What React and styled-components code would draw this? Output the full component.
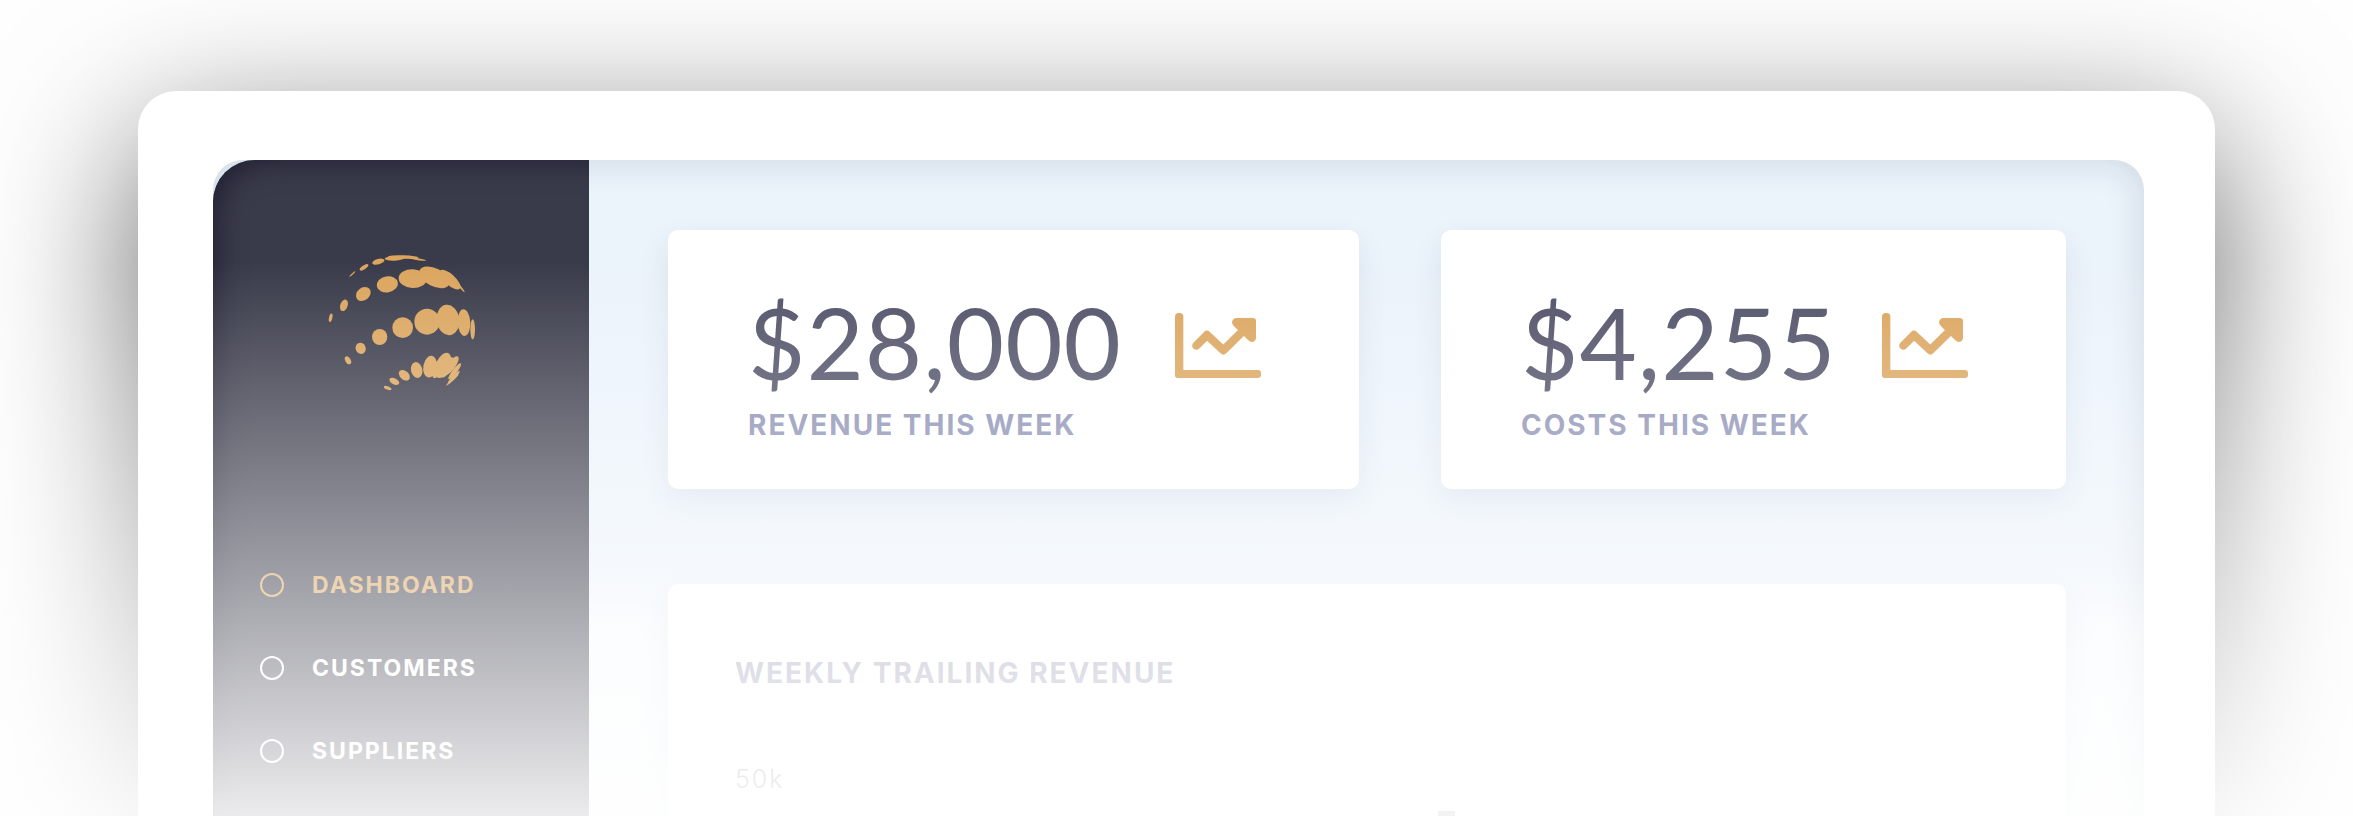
import React from "react";
import styled, { createGlobalStyle } from "styled-components";

const GlobalStyle = createGlobalStyle`
  *, *::before, *::after { box-sizing: border-box; }
  body { margin: 0; background: #fefefe; font-family: Inter, "Open Sans", sans-serif; }
  h2, p, ul { margin: 0; padding: 0; }
`;

const gold = "#dba55e";

const Page = styled.div`
  position: relative;
  display: flex;
  flex-direction: column;
  min-height: 100vh;
  padding: 91px 138px 0;
  overflow: hidden;

  &::after {
    content: "";
    position: absolute;
    inset: 0;
    pointer-events: none;
    background: linear-gradient(rgba(255, 255, 255, 0) 32%, rgba(255, 255, 255, 0.9) 100%);
  }
`;

const Window = styled.div`
  flex: 1;
  display: flex;
  margin-bottom: -160px;
  padding: 69px 71px 0 75px;
  border-radius: 38px;
  background: #fff;
  box-shadow: 0 45px 150px rgba(8, 8, 12, 0.6);
`;

const Panel = styled.div`
  flex: 1;
  display: flex;
  border-radius: 30px 30px 0 0;
  background: linear-gradient(#ebf3fb 50%, #f7fafd 60%);
  box-shadow: inset 0 0 36px rgba(20, 40, 60, 0.14);
  overflow: hidden;
`;

const Sidebar = styled.aside`
  flex: 0 0 376px;
  padding: 94px 45px 0 47px;
  border-top-left-radius: 42px;
  background: #3a3b4a;
  box-shadow: inset 16px 14px 26px -10px #232336;
`;

const LogoLink = styled.a`
  display: flex;
  justify-content: center;
  margin-bottom: 182px;
`;

const NavList = styled.ul`
  display: flex;
  flex-direction: column;
  gap: 59px;
  list-style: none;
`;

const NavLink = styled.a`
  display: flex;
  align-items: center;
  gap: 28px;
  color: ${(p) => (p.$active ? gold : "#fff")};
  font-size: 23px;
  font-weight: 700;
  line-height: 24px;
  letter-spacing: 2px;
  text-decoration: none;
`;

const Ring = styled.span`
  width: 24px;
  height: 24px;
  border: 2px solid currentColor;
  border-radius: 50%;
`;

const Main = styled.main`
  flex: 1;
  display: flex;
  flex-direction: column;
  gap: 95px;
  padding: 70px 78px 0 79px;
`;

const Stats = styled.div`
  display: grid;
  grid-template-columns: 691fr 625fr;
  gap: 82px;
`;

const Card = styled.section`
  border-radius: 10px;
  background: #fff;
  box-shadow: 0 12px 30px rgba(40, 60, 90, 0.09);
`;

const StatCard = styled(Card)`
  padding: 62px 98px 47px 80px;
`;

const StatRow = styled.div`
  display: flex;
  align-items: flex-end;
  justify-content: space-between;
  margin-bottom: 16px;
`;

const Amount = styled.p`
  color: #4f5067;
  font-family: Lato, "Open Sans", sans-serif;
  font-size: 99px;
  line-height: 100px;
  letter-spacing: 1px;
`;

const TrendSvg = styled.svg`
  width: 86px;
  height: 65px;
  margin-bottom: 14px;
`;

const Label = styled.h2`
  color: ${(p) => (p.$muted ? "#a0a0ba" : "#898db2")};
  font-size: 28px;
  font-weight: 700;
  line-height: 34px;
  letter-spacing: 2px;
`;

const ChartCard = styled(Card)`
  flex: 1;
  padding: 72px 67px 0;
`;

const Plot = styled.div`
  display: flex;
  gap: 654px;
  margin-top: 73px;
`;

const AxisLabel = styled.span`
  color: #888;
  font-size: 25px;
  font-weight: 300;
  line-height: 32px;
  letter-spacing: 2px;
`;

const Bar = styled.span`
  width: 17px;
  height: 160px;
  margin-top: 48px;
  background: #888;
`;

const dots = [
  [157, 132, 12, 2, -42], [192, 112, 15, 6, -33], [235, 95, 19, 8, -15],
  [284, 85, 30, 7, -3], [310, 81, 46, 5, 2], [345, 86, 34, 3, 10],
  [92, 263, 5, 13, 12], [132, 226, 11, 18, 20], [190, 192, 24, 19, -40],
  [262, 163, 32, 24, -10], [338, 146, 42, 28, 3], [403, 142, 49, 27, 27],
  [450, 149, 40, 16, 42], [480, 170, 22, 3, 50],
  [144, 391, 8, 13, -30], [182, 355, 15, 17, -20], [239, 321, 23, 24, 0],
  [308, 293, 31, 31, 0], [381, 275, 38, 39, 0], [444, 270, 34, 46, -8],
  [492, 278, 19, 40, -3], [518, 298, 7, 30, 0],
  [263, 474, 12, 5, 20], [283, 454, 16, 9, 28], [313, 436, 19, 13, 42],
  [350, 420, 17, 24, -12], [390, 410, 20, 33, 10], [412, 416, 13, 30, 20],
  [429, 406, 21, 40, 22], [441, 412, 14, 34, 30], [454, 407, 12, 34, 36],
  [464, 424, 7, 30, 38], [461, 442, 5, 26, 43], [457, 450, 3, 25, 48],
];

function Logo() {
  return (
    <svg width="148" height="137" viewBox="84 72 444 411" fill={gold} aria-hidden="true">
      {dots.map(([x, y, rx, ry, r]) => (
        <ellipse key={`${x}-${y}`} cx={x} cy={y} rx={rx} ry={ry} transform={`rotate(${r} ${x} ${y})`} />
      ))}
    </svg>
  );
}

function TrendIcon() {
  return (
    <TrendSvg viewBox="45 39 258 195" fill="none" stroke={gold} aria-hidden="true">
      <rect x="45" y="39" width="25" height="195" rx="11" fill={gold} stroke="none" />
      <rect x="45" y="210" width="258" height="24" rx="9" fill={gold} stroke="none" />
      <path d="M109 137L141 105L190 151L256 86" strokeWidth="25" strokeLinecap="round" strokeLinejoin="round" />
      <path
        d="M228 54H279Q288 54 288 63V115Q286 126 275 126Q268 125 264 120L222 79Q216 74 216 67Q217 56 228 54Z"
        fill={gold}
        stroke="none"
      />
    </TrendSvg>
  );
}

function Stat({ amount, label }) {
  return (
    <StatCard>
      <StatRow>
        <Amount>{amount}</Amount>
        <TrendIcon />
      </StatRow>
      <Label>{label}</Label>
    </StatCard>
  );
}

const links = ["DASHBOARD", "CUSTOMERS", "SUPPLIERS"];

export default function App() {
  return (
    <Page>
      <GlobalStyle />
      <Window>
        <Panel>
          <Sidebar>
            <LogoLink href="#home" aria-label="Home">
              <Logo />
            </LogoLink>
            <nav>
              <NavList>
                {links.map((name, i) => (
                  <li key={name}>
                    <NavLink href={`#${name.toLowerCase()}`} $active={i === 0}>
                      <Ring />
                      {name}
                    </NavLink>
                  </li>
                ))}
              </NavList>
            </nav>
          </Sidebar>
          <Main>
            <Stats>
              <Stat amount="$28,000" label="REVENUE THIS WEEK" />
              <Stat amount="$4,255" label="COSTS THIS WEEK" />
            </Stats>
            <ChartCard>
              <Label $muted>WEEKLY TRAILING REVENUE</Label>
              <Plot>
                <AxisLabel>50k</AxisLabel>
                <Bar />
              </Plot>
            </ChartCard>
          </Main>
        </Panel>
      </Window>
    </Page>
  );
}
